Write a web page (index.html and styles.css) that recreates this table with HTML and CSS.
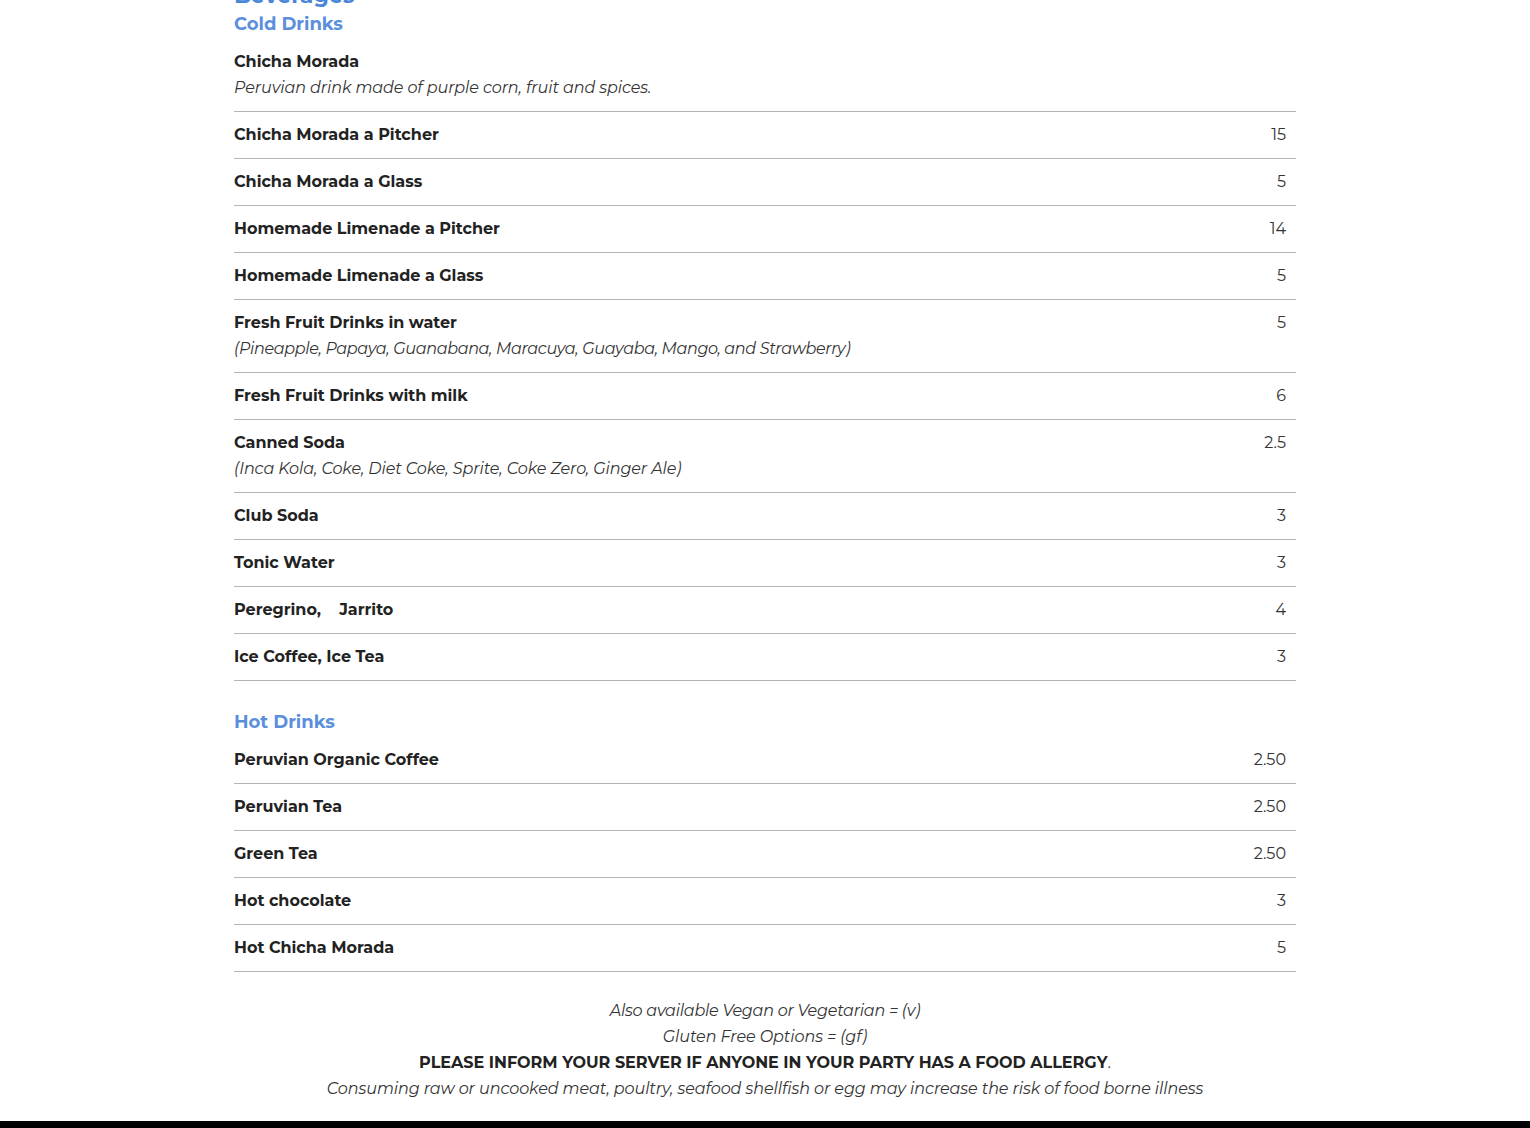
FILE: index.html
```html
<!DOCTYPE html>
<html>
<head>
<meta charset="utf-8">
<link rel="stylesheet" href="styles.css">
</head>
<body>
<main class="menu">
  <h2 class="menu-title">Beverages</h2>

  <section class="group">
    <h3 class="group-title">Cold Drinks</h3>
    <div class="item">
      <div class="item-main"><div class="item-name">Chicha Morada</div><div class="item-desc">Peruvian drink made of purple corn, fruit and spices.</div></div>
      <div class="item-price"></div>
    </div>
    <div class="item"><div class="item-main"><div class="item-name">Chicha Morada a Pitcher</div></div><div class="item-price">15</div></div>
    <div class="item"><div class="item-main"><div class="item-name">Chicha Morada a Glass</div></div><div class="item-price">5</div></div>
    <div class="item"><div class="item-main"><div class="item-name">Homemade Limenade a Pitcher</div></div><div class="item-price">14</div></div>
    <div class="item"><div class="item-main"><div class="item-name">Homemade Limenade a Glass</div></div><div class="item-price">5</div></div>
    <div class="item">
      <div class="item-main"><div class="item-name">Fresh Fruit Drinks in water</div><div class="item-desc item-desc-long">(Pineapple, Papaya, Guanabana, Maracuya, Guayaba, Mango, and Strawberry)</div></div>
      <div class="item-price">5</div>
    </div>
    <div class="item"><div class="item-main"><div class="item-name">Fresh Fruit Drinks with milk</div></div><div class="item-price">6</div></div>
    <div class="item">
      <div class="item-main"><div class="item-name">Canned Soda</div><div class="item-desc">(Inca Kola, Coke, Diet Coke, Sprite, Coke Zero, Ginger Ale)</div></div>
      <div class="item-price">2.5</div>
    </div>
    <div class="item"><div class="item-main"><div class="item-name">Club Soda</div></div><div class="item-price">3</div></div>
    <div class="item"><div class="item-main"><div class="item-name">Tonic Water</div></div><div class="item-price">3</div></div>
    <div class="item"><div class="item-main"><div class="item-name">Peregrino,&nbsp;&nbsp;&nbsp; Jarrito</div></div><div class="item-price">4</div></div>
    <div class="item"><div class="item-main"><div class="item-name">Ice Coffee, Ice Tea</div></div><div class="item-price">3</div></div>
  </section>

  <section class="group group-next">
    <h3 class="group-title">Hot Drinks</h3>
    <div class="item"><div class="item-main"><div class="item-name">Peruvian Organic Coffee</div></div><div class="item-price">2.50</div></div>
    <div class="item"><div class="item-main"><div class="item-name">Peruvian Tea</div></div><div class="item-price">2.50</div></div>
    <div class="item"><div class="item-main"><div class="item-name">Green Tea</div></div><div class="item-price">2.50</div></div>
    <div class="item"><div class="item-main"><div class="item-name">Hot chocolate</div></div><div class="item-price">3</div></div>
    <div class="item"><div class="item-main"><div class="item-name">Hot Chicha Morada</div></div><div class="item-price">5</div></div>
  </section>

  <div class="notes">
    <p class="note-italic note-tight">Also available Vegan or Vegetarian = (v)</p>
    <p class="note-italic">Gluten Free Options = (gf)</p>
    <p class="note-strong"><strong>PLEASE INFORM YOUR SERVER IF ANYONE IN YOUR PARTY HAS A FOOD ALLERGY</strong>.</p>
    <p class="note-italic">Consuming raw or uncooked meat, poultry, seafood shellfish or egg may increase the risk of food borne illness</p>
  </div>
</main>
<footer class="site-footer"></footer>
</body>
</html>
```

FILE: styles.css
```css
* { box-sizing: border-box; }
html, body { margin: 0; padding: 0; background: #fff; }
body {
  font-family: "Montserrat", "Inter", "Open Sans", sans-serif;
  color: #222;
  font-size: 16px;
  line-height: 26px;
}
.menu {
  width: 1062px;
  margin: 0 auto;
  margin-top: -19px;
}
.menu-title {
  margin: 0;
  font-size: 22px;
  line-height: 30px;
  font-weight: 700;
  color: #4a86d8;
}
.group-title {
  margin: 0 0 2px;
  font-size: 18px;
  line-height: 26px;
  font-weight: 700;
  color: #5b8fdc;
}
.group-next { margin-top: 28px; }
.item {
  display: flex;
  justify-content: space-between;
  align-items: flex-start;
  padding: 10px 10px 10px 0;
  border-bottom: 1px solid #b5b5b5;
}
.item-name { font-weight: 700; color: #222; }
.item-desc { font-style: italic; color: #333; letter-spacing: -0.1px; }
.item-desc-long { letter-spacing: -0.35px; }
.item-price { color: #333; }
.notes {
  margin-top: 26px;
  text-align: center;
  padding-bottom: 19px;
}
.notes p { margin: 0; }
.note-italic { font-style: italic; color: #333; letter-spacing: -0.09px; }
.note-tight { letter-spacing: -0.25px; }
.note-strong { color: #333; }
.note-strong strong { color: #222; font-weight: 700; }
.site-footer {
  height: 60px;
  background: #000;
}
```
